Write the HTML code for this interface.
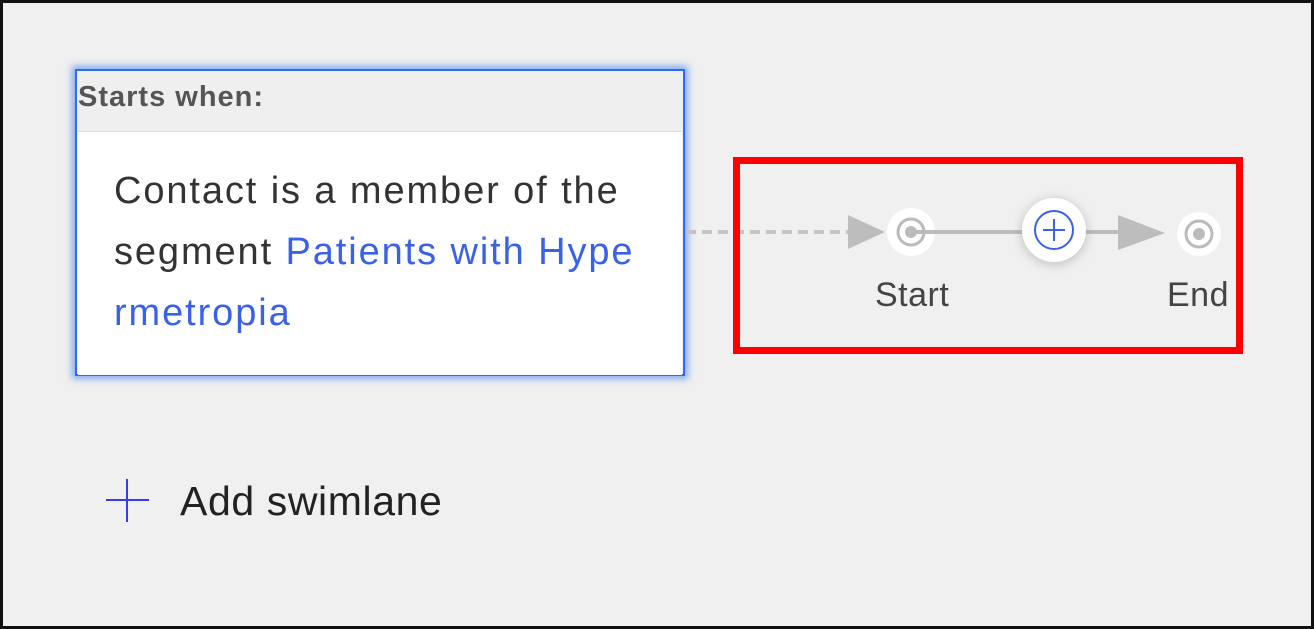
<!DOCTYPE html>
<html><head><style>
html,body{margin:0;padding:0;}
body{width:1314px;height:629px;position:relative;overflow:hidden;background:#fff;font-family:"Liberation Sans",sans-serif;}
.frame{position:absolute;left:0;top:0;width:1308px;height:623px;border:3px solid #111;background:#f0f0f0;}
.card{position:absolute;left:75px;top:69px;width:606px;height:303px;border:2px solid #2a6df0;box-shadow:0 0 7px 3px rgba(40,110,240,0.55);background:#efefef;}
.hdr{position:absolute;left:1px;top:10px;font-size:29px;color:#555;font-weight:bold;letter-spacing:1px;}
.inner{position:absolute;left:1px;top:60px;width:604px;height:243px;background:#fff;border-top:1px solid #ddd;}
.ln{position:absolute;left:36px;font-size:38px;color:#333;white-space:nowrap;letter-spacing:1.9px;}
.blue{color:#3a62e6;}
.red{position:absolute;left:733px;top:157px;width:496px;height:183px;border:7px solid #f00;}
.lbl{position:absolute;font-size:34px;color:#444;letter-spacing:0.5px;}
</style></head><body>
<div class="frame"></div>
<div class="card">
  <div class="hdr">Starts when:</div>
  <div class="inner">
    <div class="ln" style="top:38px">Contact is a member of the</div>
    <div class="ln" style="top:99px">segment <span class="blue">Patients with Hype</span></div>
    <div class="ln blue" style="top:160px">rmetropia</div>
  </div>
</div>
<svg width="1314" height="629" style="position:absolute;left:0;top:0">
  <defs><filter id="sh" x="-50%" y="-50%" width="200%" height="200%"><feGaussianBlur stdDeviation="5"/></filter></defs>
  <line x1="686" y1="232" x2="848" y2="232" stroke="#c4c4c4" stroke-width="4" stroke-dasharray="10,6"/>
  <polygon points="848,215 885,232 848,249" fill="#bdbdbd"/>
  <circle cx="911" cy="232" r="24" fill="#fff"/>
  <circle cx="911" cy="232" r="13" fill="none" stroke="#bbb" stroke-width="3"/>
  <circle cx="911" cy="232" r="6" fill="#bbb"/>
  <line x1="911" y1="232" x2="1140" y2="232" stroke="#bbb" stroke-width="4"/>
  <circle cx="1054" cy="232" r="33" fill="#999" opacity="0.5" filter="url(#sh)"/>
  <circle cx="1054" cy="230" r="32" fill="#fff"/>
  <circle cx="1054" cy="230" r="19" fill="none" stroke="#3a62e6" stroke-width="2"/>
  <line x1="1043" y1="230" x2="1065" y2="230" stroke="#3a62e6" stroke-width="2"/>
  <line x1="1054" y1="219" x2="1054" y2="241" stroke="#3a62e6" stroke-width="2"/>
  <circle cx="1199" cy="234" r="22" fill="#fff"/>
  <polygon points="1118,215 1165,233 1118,250" fill="#bdbdbd"/>
  <circle cx="1199" cy="234" r="13" fill="none" stroke="#bbb" stroke-width="3"/>
  <circle cx="1199" cy="234" r="6" fill="#bbb"/>
  <line x1="106" y1="500" x2="149" y2="500" stroke="#3a3af0" stroke-width="2"/>
  <line x1="127" y1="479" x2="127" y2="522" stroke="#3a3af0" stroke-width="2"/>
</svg>
<div class="red"></div>
<div class="lbl" style="left:875px;top:276px">Start</div>
<div class="lbl" style="left:1167px;top:276px">End</div>
<div style="position:absolute;left:180px;top:478px;font-size:41px;color:#222;letter-spacing:0.6px;">Add swimlane</div>
</body></html>
